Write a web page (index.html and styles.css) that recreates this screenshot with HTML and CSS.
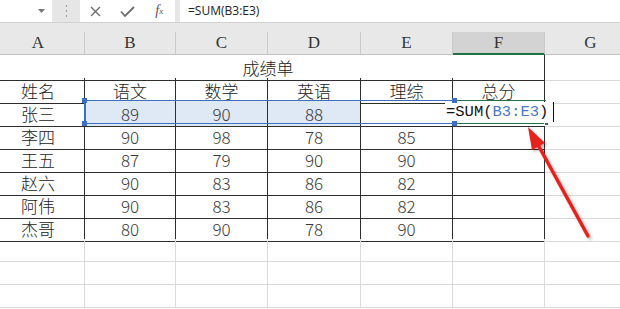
FILE: index.html
```html
<!DOCTYPE html>
<html>
<head>
    <title>成绩单 - SUM</title>
    <meta charset="utf-8">
    <link rel="stylesheet" href="styles.css">
</head>
<body>
    <div class="toolbar">
        <div class="namebox">
            <svg class="drop" width="7" height="4" viewBox="0 0 7 4"><path d="M0 0h7L3.5 4z" fill="#777"/></svg>
        </div>
        <div class="grip">
            <svg width="3" height="13" viewBox="0 0 3 13"><path d="M1 0h1v2H1zM1 5h1v2H1zM1 10h1v2H1z" fill="#9a9a9a"/></svg>
        </div>
        <div class="actions">
            <span class="icon"><svg width="11" height="11" viewBox="0 0 11 11"><path d="M1 1l9 9M10 1l-9 9" stroke="#6d6d6d" stroke-width="1.4" fill="none"/></svg></span>
            <span class="icon"><svg width="15" height="11" viewBox="0 0 15 11"><path d="M1 5.5l4 4.5L14 1" stroke="#6d6d6d" stroke-width="1.8" fill="none"/></svg></span>
            <span class="icon fx">f<sub>x</sub></span>
        </div>
        <div class="formula">=SUM(B3:E3)</div>
    </div>

    <div class="heads">
        <div class="hrow">
            <div class="h">A</div>
            <div class="h">B</div>
            <div class="h">C</div>
            <div class="h">D</div>
            <div class="h">E</div>
            <div class="h active">F</div>
            <div class="h">G</div>
        </div>
    </div>

    <div class="sheet">
        <div class="row">
            <div class="c title">成绩单</div>
            <div class="c"></div>
        </div>
        <div class="row">
            <div class="c t">姓名</div>
            <div class="c t">语文</div>
            <div class="c t">数学</div>
            <div class="c t">英语</div>
            <div class="c t">理综</div>
            <div class="c t">总分</div>
            <div class="c"></div>
        </div>
        <div class="row">
            <div class="c t">张三</div>
            <div class="c t sel num">89</div>
            <div class="c t sel num">90</div>
            <div class="c t sel num">88</div>
            <div class="c t"></div>
            <div class="c t"></div>
            <div class="c"></div>

            <div class="range">
                <span class="handle tl"></span>
                <span class="handle bl"></span>
                <span class="handle tr"></span>
                <span class="handle br"></span>
            </div>
            <div class="current"><span class="fill"></span></div>
            <div class="edit">=SUM(<span class="ref">B3:E3</span>)</div>
            <div class="caret"></div>
        </div>
        <div class="row">
            <div class="c t">李四</div>
            <div class="c t num">90</div>
            <div class="c t num">98</div>
            <div class="c t num">78</div>
            <div class="c t num">85</div>
            <div class="c t"></div>
            <div class="c"></div>
        </div>
        <div class="row">
            <div class="c t">王五</div>
            <div class="c t num">87</div>
            <div class="c t num">79</div>
            <div class="c t num">90</div>
            <div class="c t num">90</div>
            <div class="c t"></div>
            <div class="c"></div>
        </div>
        <div class="row">
            <div class="c t">赵六</div>
            <div class="c t num">90</div>
            <div class="c t num">83</div>
            <div class="c t num">86</div>
            <div class="c t num">82</div>
            <div class="c t"></div>
            <div class="c"></div>
        </div>
        <div class="row">
            <div class="c t">阿伟</div>
            <div class="c t num">90</div>
            <div class="c t num">83</div>
            <div class="c t num">86</div>
            <div class="c t num">82</div>
            <div class="c t"></div>
            <div class="c"></div>
        </div>
        <div class="row">
            <div class="c t">杰哥</div>
            <div class="c t num">80</div>
            <div class="c t num">90</div>
            <div class="c t num">78</div>
            <div class="c t num">90</div>
            <div class="c t"></div>
            <div class="c"></div>
        </div>
        <div class="row">
            <div class="c"></div><div class="c"></div><div class="c"></div><div class="c"></div><div class="c"></div><div class="c"></div><div class="c"></div>
        </div>
        <div class="row">
            <div class="c"></div><div class="c"></div><div class="c"></div><div class="c"></div><div class="c"></div><div class="c"></div><div class="c"></div>
        </div>
        <div class="row">
            <div class="c"></div><div class="c"></div><div class="c"></div><div class="c"></div><div class="c"></div><div class="c"></div><div class="c"></div>
        </div>
    </div>

    <!-- red pointer drawn over the sheet -->
    <svg class="arrow" width="620" height="309" viewBox="0 0 620 309">
        <defs>
            <filter id="shadow" x="-20%" y="-20%" width="140%" height="140%">
                <feDropShadow dx="2" dy="2" stdDeviation="1.5" flood-color="#000" flood-opacity="0.3"/>
            </filter>
        </defs>
        <g filter="url(#shadow)">
            <line x1="588" y1="236" x2="537" y2="143" stroke="#e5211f" stroke-width="3.5" stroke-linecap="round"/>
            <polygon points="528,127 545,143 532,150" fill="#e5211f"/>
        </g>
    </svg>
</body>
</html>
```

FILE: styles.css
```css
body {
    margin: 0;
    width: 620px;
    height: 309px;
    overflow: hidden;
    position: relative;
    background: #fff;
    font-family: "Noto Sans CJK SC", "Noto Sans", sans-serif;
    font-weight: 300;
    color: #222;
}
.toolbar {
    display: flex;
    height: 22px;
    background: #e6e6e6;
    border-bottom: 1px solid #d2d2d2;
}
.namebox {
    width: 52px;
    background: #fff;
    display: flex;
    align-items: center;
    justify-content: flex-end;
    padding-right: 7px;
    box-sizing: border-box;
}
.grip {
    width: 28px;
    display: flex;
    align-items: center;
    justify-content: center;
}
.actions {
    width: 95px;
    background: #fff;
    display: flex;
}
.icon {
    width: 32px;
    display: flex;
    align-items: center;
    justify-content: center;
}
.fx {
    font-family: "Liberation Serif", serif;
    font-style: italic;
    font-weight: 400;
    font-size: 14px;
    color: #555;
}
.fx sub {
    font-size: 9px;
    vertical-align: -2px;
}
.formula {
    flex: 1;
    margin-left: 5px;
    background: #fff;
    padding-left: 8px;
    font-family: "Open Sans", "Noto Sans", sans-serif;
    font-weight: 400;
    font-size: 12px;
    line-height: 22px;
    color: #222;
}
.heads {
    height: 32px;
    background: #e8e8e8;
    display: flex;
    align-items: flex-end;
}
.hrow, .row {
    display: grid;
    grid-template-columns: 93px 91px 92px 93px 92px 92px 92px;
    margin-left: -8px;
}
.hrow {
    height: 23px;
}
.h {
    box-sizing: border-box;
    border-right: 1px solid #c9c9c9;
    border-bottom: 1px solid #c3c3c3;
    display: flex;
    align-items: center;
    justify-content: center;
    font-family: "Liberation Serif", serif;
    font-weight: 400;
    font-size: 17px;
    color: #333;
}
.h.active {
    background: #d3d3d3;
    border-bottom: 2px solid #217346;
}
.row {
    height: 23px;
    position: relative;
}
.c {
    box-sizing: border-box;
    border-right: 1px solid #dadada;
    border-bottom: 1px solid #dadada;
    display: flex;
    align-items: center;
    justify-content: center;
    font-size: 17px;
    white-space: nowrap;
}
.c.t, .c.title {
    border-right-color: #2e2e2e;
    border-bottom-color: #2e2e2e;
}
.c.title {
    grid-column: span 6;
}
.num {
    color: #3a3a3a;
}
.sel {
    background: #dfe8f5;
}
.range {
    position: absolute;
    left: 92px;
    top: -1px;
    width: 370px;
    height: 24px;
    box-sizing: border-box;
    border: 1px solid #3d6fc2;
    border-left-width: 2px;
    border-right: none;
    z-index: 3;
}
.handle {
    position: absolute;
    width: 5px;
    height: 5px;
    background: #3d6fc2;
}
.handle.tl { left: -4px; top: -3px; }
.handle.bl { left: -4px; bottom: -3px; }
.handle.tr { right: -3px; top: -3px; }
.handle.br { right: -3px; bottom: -3px; }
.current {
    position: absolute;
    left: 461px;
    top: -1px;
    width: 93px;
    height: 24px;
    box-sizing: border-box;
    border-top: 1px solid #217346;
    border-bottom: 2px solid #217346;
    z-index: 1;
}
.fill {
    position: absolute;
    right: -3px;
    bottom: -4px;
    width: 5px;
    height: 5px;
    background: #217346;
    border: 1px solid #fff;
    box-sizing: border-box;
}
.edit {
    position: absolute;
    left: 453px;
    top: 1px;
    width: 107px;
    height: 21px;
    background: #fff;
    font-family: "Liberation Mono", monospace;
    font-weight: 400;
    font-size: 15.5px;
    line-height: 21px;
    color: #111;
    padding-left: 1px;
    box-sizing: border-box;
    z-index: 2;
}
.ref {
    color: #4a78c4;
}
.caret {
    position: absolute;
    left: 561px;
    top: 1px;
    width: 1px;
    height: 20px;
    background: #111;
    z-index: 2;
}
.arrow {
    position: absolute;
    left: 0;
    top: 0;
    pointer-events: none;
    z-index: 5;
}
```
